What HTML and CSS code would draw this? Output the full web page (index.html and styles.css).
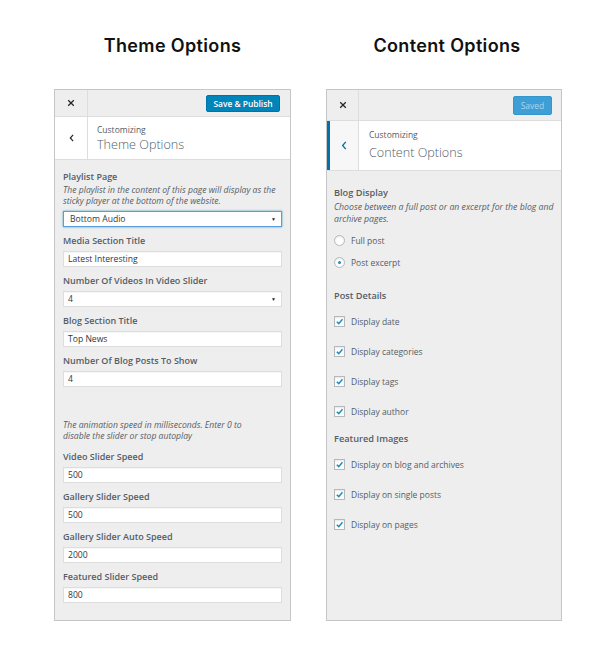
FILE: index.html
```html
<!DOCTYPE html>
<html>
<head>
<meta charset="utf-8">
<link rel="stylesheet" href="styles.css">
</head>
<body>
<div class="page">
  <div class="col">
    <h1 class="title">Theme Options</h1>
    <div class="panel panel-theme">
      <div class="topbar">
        <div class="close"><svg viewBox="0 0 10 10" width="8" height="8"><path d="M1.5 1.5 L8.5 8.5 M8.5 1.5 L1.5 8.5" stroke="#23282d" stroke-width="1.6" fill="none"/></svg></div>
        <div class="actions"><span class="btn btn-primary">Save &amp; Publish</span></div>
      </div>
      <div class="crumb">
        <div class="back"><svg viewBox="0 0 6 10" width="5" height="8"><path d="M5 1 L1.5 5 L5 9" stroke="#23282d" stroke-width="1.5" fill="none"/></svg></div>
        <div class="crumb-text"><span class="crumb-small">Customizing</span><span class="crumb-title">Theme Options</span></div>
      </div>
      <div class="body">
        <div class="field">
          <div class="label">Playlist Page</div>
          <div class="desc">The playlist in the content of this page will display as the sticky player at the bottom of the website.</div>
          <div class="input select focus"><span>Bottom Audio</span><span class="arrow">▼</span></div>
        </div>
        <div class="field">
          <div class="label">Media Section Title</div>
          <div class="input">Latest Interesting</div>
        </div>
        <div class="field">
          <div class="label">Number Of Videos In Video Slider</div>
          <div class="input select"><span>4</span><span class="arrow">▼</span></div>
        </div>
        <div class="field">
          <div class="label">Blog Section Title</div>
          <div class="input">Top News</div>
        </div>
        <div class="field">
          <div class="label">Number Of Blog Posts To Show</div>
          <div class="input">4</div>
        </div>
        <div class="desc desc-block">The animation speed in milliseconds. Enter 0 to disable the slider or stop autoplay</div>
        <div class="field field-after-desc">
          <div class="label">Video Slider Speed</div>
          <div class="input">500</div>
        </div>
        <div class="field">
          <div class="label">Gallery Slider Speed</div>
          <div class="input">500</div>
        </div>
        <div class="field">
          <div class="label">Gallery Slider Auto Speed</div>
          <div class="input">2000</div>
        </div>
        <div class="field">
          <div class="label">Featured Slider Speed</div>
          <div class="input">800</div>
        </div>
      </div>
    </div>
  </div>

  <div class="col">
    <h1 class="title title-right">Content Options</h1>
    <div class="panel panel-content">
      <div class="topbar">
        <div class="close"><svg viewBox="0 0 10 10" width="8" height="8"><path d="M1.5 1.5 L8.5 8.5 M8.5 1.5 L1.5 8.5" stroke="#23282d" stroke-width="1.6" fill="none"/></svg></div>
        <div class="actions"><span class="btn btn-saved">Saved</span></div>
      </div>
      <div class="crumb">
        <div class="back"><svg viewBox="0 0 6 10" width="6" height="9"><path d="M5 1 L1.5 5 L5 9" stroke="#0073aa" stroke-width="1.5" fill="none"/></svg></div>
        <div class="crumb-text"><span class="crumb-small">Customizing</span><span class="crumb-title">Content Options</span></div>
      </div>
      <div class="body">
        <div class="label">Blog Display</div>
        <div class="desc">Choose between a full post or an excerpt for the blog and archive pages.</div>
        <div class="choices">
          <div class="opt"><span class="radio"></span>Full post</div>
          <div class="opt"><span class="radio checked"></span>Post excerpt</div>
        </div>
        <div class="label group-label">Post Details</div>
        <div class="checks">
          <div class="opt"><span class="check"><svg viewBox="0 0 10 10" width="9" height="9"><path d="M2 5.2 L4.2 7.4 L8.3 2.6" stroke="#1e8cbe" stroke-width="1.7" fill="none"/></svg></span>Display date</div>
          <div class="opt"><span class="check"><svg viewBox="0 0 10 10" width="9" height="9"><path d="M2 5.2 L4.2 7.4 L8.3 2.6" stroke="#1e8cbe" stroke-width="1.7" fill="none"/></svg></span>Display categories</div>
          <div class="opt"><span class="check"><svg viewBox="0 0 10 10" width="9" height="9"><path d="M2 5.2 L4.2 7.4 L8.3 2.6" stroke="#1e8cbe" stroke-width="1.7" fill="none"/></svg></span>Display tags</div>
          <div class="opt"><span class="check"><svg viewBox="0 0 10 10" width="9" height="9"><path d="M2 5.2 L4.2 7.4 L8.3 2.6" stroke="#1e8cbe" stroke-width="1.7" fill="none"/></svg></span>Display author</div>
        </div>
        <div class="label group-label group-label-2">Featured Images</div>
        <div class="checks">
          <div class="opt"><span class="check"><svg viewBox="0 0 10 10" width="9" height="9"><path d="M2 5.2 L4.2 7.4 L8.3 2.6" stroke="#1e8cbe" stroke-width="1.7" fill="none"/></svg></span>Display on blog and archives</div>
          <div class="opt"><span class="check"><svg viewBox="0 0 10 10" width="9" height="9"><path d="M2 5.2 L4.2 7.4 L8.3 2.6" stroke="#1e8cbe" stroke-width="1.7" fill="none"/></svg></span>Display on single posts</div>
          <div class="opt"><span class="check"><svg viewBox="0 0 10 10" width="9" height="9"><path d="M2 5.2 L4.2 7.4 L8.3 2.6" stroke="#1e8cbe" stroke-width="1.7" fill="none"/></svg></span>Display on pages</div>
        </div>
      </div>
    </div>
  </div>
</div>
</body>
</html>
```

FILE: styles.css
```css
* { box-sizing: border-box; }
html, body { margin: 0; padding: 0; background: #fff; }
body { font-family: "Open Sans", "Noto Sans", sans-serif; color: #555d66; }

.page {
  display: grid;
  grid-template-columns: 237px 236px;
  column-gap: 35px;
  padding: 0 54px;
}
.col { display: flex; flex-direction: column; }

.title {
  margin: 0 0 32px 0;
  padding-top: 35px;
  height: 57px;
  line-height: 22px;
  font-family: "Inter", "Noto Sans", sans-serif;
  font-weight: 600;
  font-size: 18px;
  color: #111;
  text-align: center;
  letter-spacing: 0.35px;
}
.title-right { padding-left: 6px; }

.panel {
  height: 532px;
  border: 1px solid #c6c6c6;
  background: #eeeeee;
  display: flex;
  flex-direction: column;
}

.topbar {
  display: flex;
  border-bottom: 1px solid #dddddd;
  background: #eeeeee;
}
.panel-theme .topbar { height: 27px; }
.panel-content .topbar { height: 31px; }
.close {
  display: flex;
  align-items: center;
  justify-content: center;
  border-right: 1px solid #dddddd;
}
.panel-theme .close { width: 33px; }
.panel-content .close { width: 32px; }
.actions {
  flex: 1;
  display: flex;
  align-items: center;
  justify-content: flex-end;
  padding-right: 10px;
}
.panel-content .actions { padding-right: 9px; }

.btn {
  display: inline-flex;
  align-items: center;
  justify-content: center;
  border-radius: 2px;
  color: #fff;
  font-weight: 600;
}
.btn-primary {
  width: 74px;
  height: 17px;
  background: #0085ba;
  border: 1px solid #0073aa;
  font-size: 8.4px;
}
.btn-saved {
  width: 39px;
  height: 19px;
  background: #3d9fd6;
  border: 1px solid #3596cc;
  color: #a9d6f1;
  font-weight: 400;
  font-size: 8.5px;
}

.crumb {
  display: flex;
  background: #fff;
  border-bottom: 1px solid #dddddd;
}
.panel-theme .crumb { height: 43px; }
.panel-content .crumb { height: 50px; }
.back {
  display: flex;
  align-items: center;
  justify-content: center;
  border-right: 1px solid #dddddd;
  background: #fff;
}
.panel-theme .back { width: 33px; }
.panel-content .back { width: 32px; border-left: 3px solid #0073aa; background: #f7f7f7; }
.crumb-text {
  display: flex;
  flex-direction: column;
  justify-content: center;
  padding-left: 9px;
}
.panel-content .crumb-text { padding-left: 10px; }
.crumb-small { font-size: 8.5px; line-height: 11px; color: #555d66; }
.crumb-title { font-size: 12.6px; line-height: 16px; margin-top: 2px; color: #555d66; font-weight: 300; }
.panel-content .crumb-small { font-size: 8.5px; line-height: 12px; }
.panel-content .crumb-title { font-size: 12.6px; line-height: 18px; margin-top: 3px; }

.body { flex: 1; }
.panel-theme .body { padding: 11px 7px 0 8px; }
.panel-content .body { padding: 15px 5px 0 7px; }

.label {
  font-weight: 600;
  color: #555d66;
}
.panel-theme .label { font-size: 9px; line-height: 12px; }
.desc { font-style: italic; color: #555d66; }
.panel-theme .desc { font-size: 8.6px; line-height: 11px; margin-top: 2px; }
.panel-theme .field .input { margin-right: 1px; }

.field + .field { margin-top: 8px; }
.input {
  background: #fff;
  border: 1px solid #dddddd;
  height: 16px;
  margin-top: 4px;
  font-size: 8.6px;
  color: #32373c;
  padding: 0 4px;
  display: flex;
  align-items: center;
  box-shadow: inset 0 1px 1px rgba(0,0,0,0.04);
}
.select { justify-content: space-between; padding-right: 5px; }
.select .arrow { font-size: 5px; color: #23282d; }
.focus { border-color: #5b9dd9; box-shadow: 0 0 2px rgba(30,140,190,0.8); padding-left: 6px; }
.panel-theme .desc-block { margin-top: 33px; margin-right: 22px; }
.field-after-desc { margin-top: 9px; }

.panel-content .label { font-size: 9.2px; line-height: 13px; }
.panel-content .desc { font-size: 8.7px; line-height: 12px; margin-top: 2px; }
.choices { margin-top: 8px; display: flex; flex-direction: column; gap: 8px; }
.opt {
  display: flex;
  align-items: center;
  height: 14px;
  font-size: 8.5px;
  color: #555d66;
}
.radio, .check {
  width: 11px;
  height: 11px;
  border: 1px solid #b4b9be;
  background: #fff;
  margin-right: 6px;
  flex: none;
  display: flex;
  align-items: center;
  justify-content: center;
  box-shadow: inset 0 1px 2px rgba(0,0,0,0.1);
}
.radio { border-radius: 50%; }
.radio.checked::after {
  content: "";
  width: 3px;
  height: 3px;
  border-radius: 50%;
  background: #1e8cbe;
}
.group-label { margin-top: 20px; }
.group-label-2 { margin-top: 14px; }
.checks { margin-top: 12px; display: flex; flex-direction: column; gap: 16px; }
```
